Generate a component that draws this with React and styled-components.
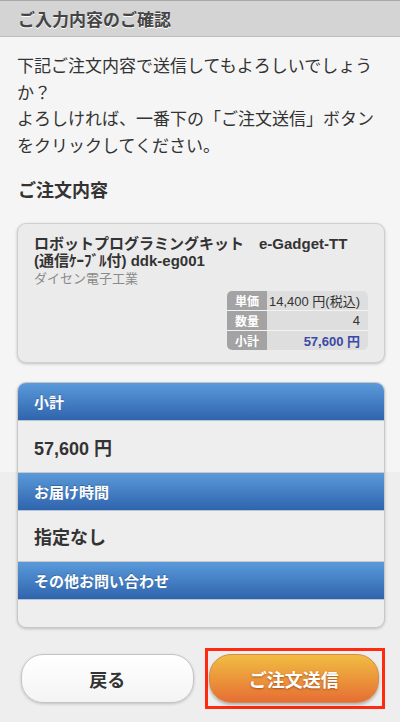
import React from "react";
import styled, { createGlobalStyle } from "styled-components";

const GlobalStyle = createGlobalStyle`
  body {
    margin: 0;
    font-family: "Liberation Sans", "Noto Sans CJK JP", sans-serif;
    color: #333;
  }
`;

const Page = styled.div`
  min-height: 722px;
  background: linear-gradient(#f5f5f5 0, #f5f5f5 472px, #eeeeee 472px);
`;

const TitleBar = styled.h1`
  margin: 0;
  height: 35px;
  padding: 0 18px;
  display: flex;
  align-items: center;
  background: #d4d4d4;
  border-top: 1px solid #a8a8a8;
  border-bottom: 1px solid #bdbdbd;
  font-size: 17px;
  font-weight: bold;
  color: #444;
  text-shadow: 0 1px 0 #fff;
`;

const Content = styled.div`
  padding: 17px 15px 0 17px;
`;

const Lead = styled.p`
  margin: 0;
  font-size: 17px;
  line-height: 26.6px;
  color: #333;
`;

const SectionTitle = styled.h2`
  margin: 18px 0 19px 1px;
  font-size: 18px;
  line-height: 26px;
  font-weight: bold;
  color: #333;
`;

const OrderCard = styled.div`
  background: #ebebeb;
  border: 1px solid #cfcfcf;
  border-radius: 9px;
  box-shadow: 0 1px 3px rgba(0, 0, 0, 0.22);
  padding: 11px 16px 12px 16px;
  display: flex;
  flex-direction: column;
`;

const ItemName = styled.div`
  font-size: 15px;
  line-height: 17px;
  font-weight: bold;
  color: #333;
`;

const Maker = styled.div`
  font-size: 13px;
  line-height: 18px;
  margin-top: 1px;
  color: #8a8a8a;
`;

const PriceTable = styled.div`
  align-self: flex-end;
  width: 141px;
  margin-top: 3px;
  border-radius: 5px;
  overflow: hidden;
  display: grid;
  grid-template-columns: 40px 1fr;
  row-gap: 1px;
  background: #f2f2f2;
`;

const PriceLabel = styled.div`
  height: 19px;
  background: #a3a3a3;
  color: #fff;
  font-size: 12px;
  font-weight: bold;
  display: flex;
  align-items: center;
  justify-content: center;
`;

const PriceValue = styled.div`
  height: 19px;
  background: #dedede;
  padding-right: 8px;
  font-size: 13px;
  display: flex;
  align-items: center;
  justify-content: flex-end;
  color: ${(p) => (p.total ? "#3b48a8" : "#333")};
  font-weight: ${(p) => (p.total ? "bold" : "normal")};
`;

const InfoPanel = styled.div`
  margin-top: 19px;
  border-radius: 9px;
  overflow: hidden;
  border: 1px solid #c8c8c8;
  box-shadow: 0 1px 3px rgba(0, 0, 0, 0.2);
  background: #eeeeee;
`;

const PanelHead = styled.div`
  height: 37px;
  padding: 0 16px;
  display: flex;
  align-items: center;
  background: linear-gradient(#5a9ada, #2f64ad);
  border-bottom: 1px solid #b5c4d6;
  color: #fff;
  font-size: 15px;
  font-weight: bold;
  text-shadow: 0 -1px 0 rgba(0, 0, 0, 0.25);
`;

const PanelBody = styled.div`
  height: ${(p) => p.h}px;
  padding: 0 16px;
  display: flex;
  align-items: center;
  font-size: 18px;
  font-weight: bold;
  color: #333;
  border-bottom: ${(p) => (p.last ? "none" : "1px solid #c9c9c9")};
  box-sizing: border-box;
`;

const ButtonRow = styled.div`
  margin-top: 20px;
  display: grid;
  grid-template-columns: 1fr 1fr;
  column-gap: 7px;
  align-items: center;
`;

const BackButton = styled.button`
  margin: 0 4px;
  height: 49px;
  border: 1px solid #c4c4c4;
  border-radius: 22px;
  background: linear-gradient(#ffffff, #f4f4f4);
  box-shadow: 0 1px 3px rgba(0, 0, 0, 0.2);
  font-family: inherit;
  font-size: 18px;
  font-weight: bold;
  color: #333;
`;

const Highlight = styled.div`
  border: 3px solid #ff2a10;
  padding: 3px 3px 3px 1px;
  display: flex;
`;

const SubmitButton = styled.button`
  flex: 1;
  height: 49px;
  border: 1px solid #d98a4a;
  border-radius: 22px;
  background: linear-gradient(#f1bd42, #e66e34);
  box-shadow: 0 2px 3px rgba(0, 0, 0, 0.25);
  font-family: inherit;
  font-size: 18px;
  font-weight: bold;
  color: #fff;
  text-shadow: 0 1px 2px rgba(120, 50, 0, 0.6);
`;

const prices = [
  { label: "単価", value: "14,400 円(税込)" },
  { label: "数量", value: "4" },
  { label: "小計", value: "57,600 円", total: true },
];

export default function App() {
  return (
    <Page>
      <GlobalStyle />
      <TitleBar>ご入力内容のご確認</TitleBar>
      <Content>
        <Lead>
          下記ご注文内容で送信してもよろしいでしょうか？
          <br />
          よろしければ、一番下の「ご注文送信」ボタンをクリックしてください。
        </Lead>
        <SectionTitle>ご注文内容</SectionTitle>
        <OrderCard>
          <ItemName>
            ロボットプログラミングキット　e-Gadget-TT (通信ｹｰﾌﾞﾙ付) ddk-eg001
          </ItemName>
          <Maker>ダイセン電子工業</Maker>
          <PriceTable>
            {prices.map((row) => (
              <React.Fragment key={row.label}>
                <PriceLabel>{row.label}</PriceLabel>
                <PriceValue total={row.total}>{row.value}</PriceValue>
              </React.Fragment>
            ))}
          </PriceTable>
        </OrderCard>
        <InfoPanel>
          <PanelHead>小計</PanelHead>
          <PanelBody h={52}>57,600 円</PanelBody>
          <PanelHead>お届け時間</PanelHead>
          <PanelBody h={51}>指定なし</PanelBody>
          <PanelHead>その他お問い合わせ</PanelHead>
          <PanelBody h={27} last />
        </InfoPanel>
        <ButtonRow>
          <BackButton>戻る</BackButton>
          <Highlight>
            <SubmitButton>ご注文送信</SubmitButton>
          </Highlight>
        </ButtonRow>
      </Content>
    </Page>
  );
}
